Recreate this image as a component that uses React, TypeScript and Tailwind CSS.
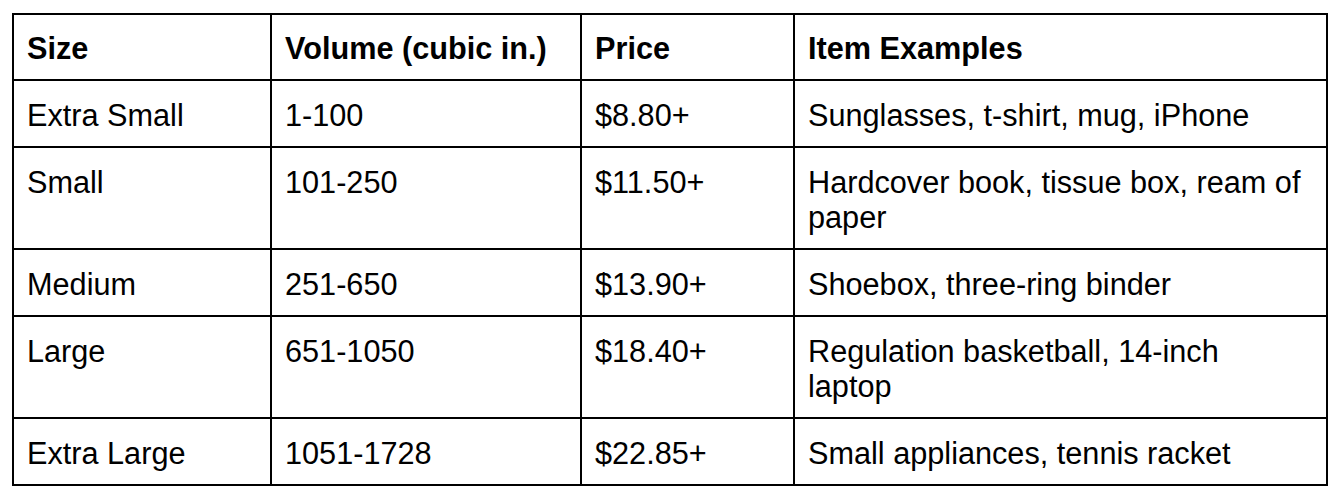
const rows = [
  ["Extra Small", "1-100", "$8.80+", "Sunglasses, t-shirt, mug, iPhone"],
  ["Small", "101-250", "$11.50+", "Hardcover book, tissue box, ream of paper"],
  ["Medium", "251-650", "$13.90+", "Shoebox, three-ring binder"],
  ["Large", "651-1050", "$18.40+", "Regulation basketball, 14-inch laptop"],
  ["Extra Large", "1051-1728", "$22.85+", "Small appliances, tennis racket"],
];

const headers = ["Size", "Volume (cubic in.)", "Price", "Item Examples"];

export default function App() {
  return (
    <div className="bg-white w-[1338px] h-[494px] pt-[13px] pl-[12px] font-['Liberation_Sans',Arial,sans-serif] text-black">
      <table className="table-fixed border-collapse w-[1314px] text-[30.67px] leading-[35px]">
        <colgroup>
          <col className="w-[258px]" />
          <col className="w-[310px]" />
          <col className="w-[213px]" />
          <col className="w-[533px]" />
        </colgroup>
        <thead>
          <tr>
            {headers.map((h) => (
              <th
                key={h}
                className="border-2 border-black text-left font-bold align-top pl-[13px] pr-[18px] pt-[16px] pb-[13px]"
              >
                {h}
              </th>
            ))}
          </tr>
        </thead>
        <tbody>
          {rows.map((r) => (
            <tr key={r[0]}>
              {r.map((c, i) => (
                <td
                  key={i}
                  className="border-2 border-black align-top pl-[13px] pr-[18px] pt-[17px] pb-[13px]"
                >
                  {c}
                </td>
              ))}
            </tr>
          ))}
        </tbody>
      </table>
    </div>
  );
}
